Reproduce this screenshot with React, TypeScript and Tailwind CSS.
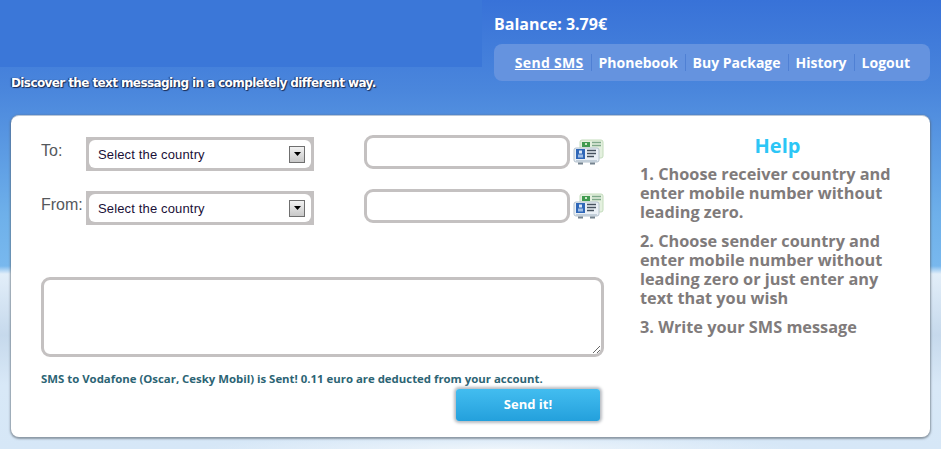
import type { ReactNode } from 'react';

const NAV_ITEMS = ['Send SMS', 'Phonebook', 'Buy Package', 'History', 'Logout'];

function ContactsIcon() {
  return (
    <svg width="31" height="27" viewBox="0 0 31 27" className="shrink-0">
      <rect x="7" y="1" width="23" height="18" rx="2" fill="#e4f0df" stroke="#c4dcbc" />
      <rect x="9" y="3" width="8" height="5" fill="#3f9a4f" />
      <rect x="12" y="4" width="2" height="2" fill="#cfe8c8" />
      <path d="M19 3.500h9M19 6.500h9" stroke="#7fa98a" strokeWidth="1.500" />
      <rect x="1" y="9" width="25" height="14" rx="2" fill="#eaf0f6" stroke="#b4c2ce" />
      <rect x="3" y="10" width="9" height="10" fill="#2f67b8" />
      <rect x="6" y="11.500" width="3" height="3" fill="#dce8f6" />
      <rect x="5" y="15.500" width="5" height="3" fill="#9dbce4" />
      <path d="M14 11.500h9M14 14.500h9M14 17.500h7" stroke="#46525f" strokeWidth="1.400" />
      <path d="M3 21h21v2H3z" fill="#c2ced9" />
      <path d="M5 24.500h5M17 24.500h5" stroke="#75838f" strokeWidth="2" />
    </svg>
  );
}

function CountrySelect() {
  return (
    <div className="w-[228px] h-[34px] bg-[#c4c1c1] p-[3px] shrink-0">
      <div className="h-full bg-white rounded-[6px] flex items-center justify-between pl-[9px] pr-[6px]">
        <span className="pt-[2px] font-['Liberation_Sans',sans-serif] text-[13px] tracking-[0.15px] text-[#1a1038]">Select the country</span>
        <div className="w-[16px] h-[17px] border border-[#6f6f6f] bg-gradient-to-b from-[#f2f2f2] to-[#c8c8c8] flex items-center justify-center">
          <svg width="7" height="4" viewBox="0 0 7 4">
            <path d="M0 0h7L3.500 4z" fill="#000" />
          </svg>
        </div>
      </div>
    </div>
  );
}

function FormRow({ label }: { label: string }) {
  return (
    <div className="flex items-start h-[54px]">
      <span className="w-[45px] pt-[4px] font-['Liberation_Sans',sans-serif] text-[16px] leading-[24px] text-[#55585c]">{label}</span>
      <div className="mt-[2px]">
        <CountrySelect />
      </div>
      <input className="ml-[50px] w-[206px] h-[34px] border-[3px] border-[#c4c1c1] rounded-[9px] bg-white outline-none" />
      <div className="ml-[3px] mt-[4px]">
        <ContactsIcon />
      </div>
    </div>
  );
}

function HelpText({ children }: { children: ReactNode }) {
  return <p className="mb-[10px] leading-[19px]">{children}</p>;
}

export default function App() {
  return (
    <div className="w-[941px] h-[449px] overflow-hidden bg-[radial-gradient(ellipse_300px_14px_at_500px_449px,#eef5fb,transparent),linear-gradient(to_bottom,#3872d8_0px,#4a86dc_90px,#6eb0ea_215px,#78b8ee_266px,#e2eef9_274px,#c6d9ec_335px,#d8e8f7_385px,#d6e7f7_449px)]">
      {/* Header */}
      <div className="flex h-[115px]">
        <div className="w-[482px]">
          <div className="h-[67px] bg-[#3b77d8]" />
          <p className="pl-[11px] pt-[7px] font-['DejaVu_Sans',sans-serif] font-bold text-[12px] leading-[18px] tracking-[-0.6px] whitespace-nowrap text-white [text-shadow:1px_1px_1px_#1a2a50,-1px_0_1px_#1a2a50]">
            Discover the text messaging in a completely different way.
          </p>
        </div>
        <div className="pl-[12px]">
          <p className="pt-[14px] font-['Open_Sans',sans-serif] font-bold text-[16px] leading-[20px] text-white">Balance: 3.79€</p>
          <nav className="mt-[10px] w-[436px] h-[37px] rounded-lg bg-[#6593df] flex items-center justify-end pr-[13px] font-['Open_Sans',sans-serif] font-bold text-[14px] whitespace-nowrap text-white">
            {NAV_ITEMS.map((item, i) => (
              <a
                key={item}
                className={`px-[7px] leading-[17px] ${i > 0 ? 'border-l border-[#4f80d4]' : 'underline tracking-[0.3px]'}`}
              >
                {item}
              </a>
            ))}
          </nav>
        </div>
      </div>

      {/* Card */}
      <div className="ml-[11px] w-[919px] h-[322px] bg-white rounded-lg border-t border-[#b9c6d6] shadow-[0_1px_2px_1px_rgba(90,100,110,0.6)] flex">
        <div className="w-[600px] pl-[30px] pt-[19px]">
          <FormRow label="To:" />
          <FormRow label="From:" />
          <textarea className="block mt-[34px] w-[563px] h-[80px] border-[3px] border-[#c4c1c1] rounded-[9px] bg-white outline-none" />
          <p className="mt-[15px] font-['Open_Sans',sans-serif] font-bold text-[11.4px] leading-[14px] whitespace-nowrap text-[#2c6474]">
            SMS to Vodafone (Oscar, Cesky Mobil) is Sent! 0.11 euro are deducted from your account.
          </p>
          <div className="flex justify-end pr-[11px] mt-[3px]">
            <button className="w-[144px] h-[32px] rounded-[3px] bg-gradient-to-b from-[#42bdf0] to-[#23a0dc] text-white font-['Open_Sans',sans-serif] font-bold text-[13px] shadow-[0_0_3px_2px_#b8bcc2]">
              Send it!
            </button>
          </div>
        </div>
        <div className="w-[262px] ml-[29px] pt-[15px] font-['Open_Sans',sans-serif] font-bold text-[16.300px] text-[#807b7b]">
          <h2 className="text-center pl-[13px] text-[20px] leading-[30px] text-[#2cc6f6]">Help</h2>
          <div className="mt-[4px]">
            <HelpText>1. Choose receiver country and enter mobile number without leading zero.</HelpText>
            <HelpText>2. Choose sender country and enter mobile number without leading zero or just enter any text that you wish</HelpText>
            <HelpText>3. Write your SMS message</HelpText>
          </div>
        </div>
      </div>
    </div>
  );
}
